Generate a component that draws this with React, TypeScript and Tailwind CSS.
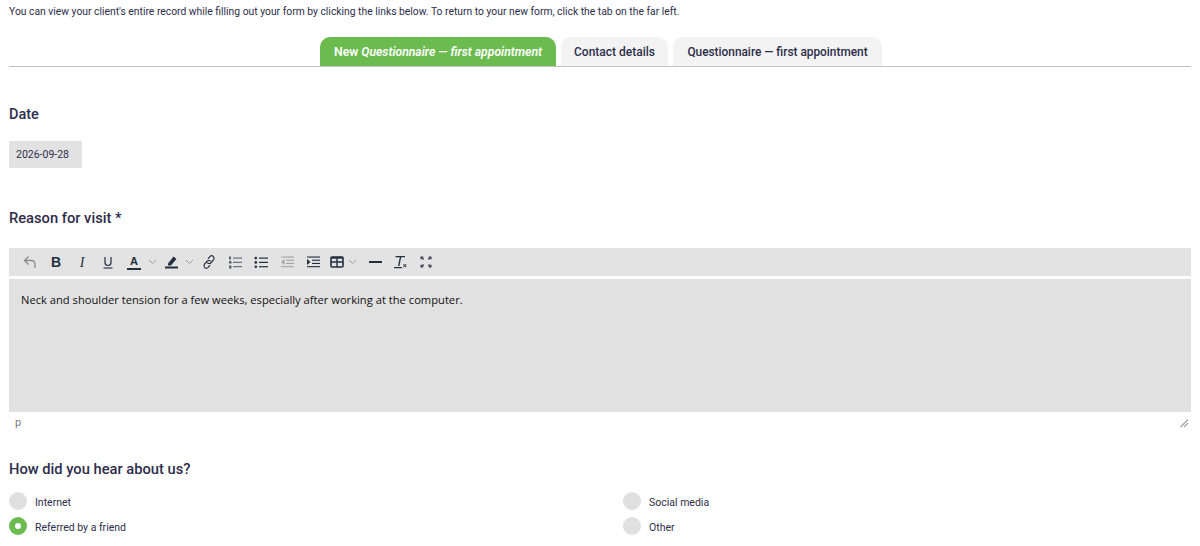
const ink = "#2d2d4a";

function Tb({ w, children }: { w: string; children: React.ReactNode }) {
  return <span className={`flex h-5 items-center justify-center ${w}`}>{children}</span>;
}

function Chevron() {
  return (
    <svg width="9" height="6" viewBox="0 0 9 6" fill="none" stroke="#9a9a9a" strokeWidth="1">
      <path d="M1 1l3.5 3.5L8 1" />
    </svg>
  );
}

function Toolbar() {
  return (
    <div className="flex h-[28px] items-center bg-[#e3e3e3] pl-[12px] text-[#222f3e]">
      <Tb w="w-[18px]">
        <svg width="14" height="14" viewBox="0 0 14 14" fill="none" stroke="#8d8d8d" strokeWidth="1.3">
          <path d="M5.5 1.5L1.5 5.5l4 4M1.5 5.5h6.5c2.5 0 4 1.6 4 4v3.5" />
        </svg>
      </Tb>
      <span className="w-[8px]" />
      <Tb w="w-[18px]">
        <span className="font-['Liberation_Sans',sans-serif] text-[14px] font-bold">B</span>
      </Tb>
      <span className="w-[8px]" />
      <Tb w="w-[18px]">
        <span className="font-['Liberation_Serif',serif] text-[14px] italic">I</span>
      </Tb>
      <span className="w-[8px]" />
      <Tb w="w-[18px]">
        <svg width="12" height="13" viewBox="0 0 12 13" fill="none" stroke="#222f3e">
          <path d="M3 1v5.5c0 4 6 4 6 0V1" strokeWidth="1.2" />
          <path d="M1.5 12h9" strokeWidth="1.1" />
        </svg>
      </Tb>
      <span className="w-[9px]" />
      <Tb w="w-[16px]">
        <span className="relative flex h-[15px] w-[14px] justify-center border-b-2 border-[#222f3e] font-['Liberation_Sans',sans-serif] text-[11px] leading-[13px] font-bold">
          A
        </span>
      </Tb>
      <span className="w-[6px]" />
      <Chevron />
      <span className="w-[6px]" />
      <Tb w="w-[16px]">
        <svg width="15" height="14" viewBox="0 0 15 14" fill="#222f3e">
          <path d="M4 8.5L9.5 1.5l3 2.5L7 10.5H4z" />
          <rect x="1" y="11.5" width="13" height="2" />
        </svg>
      </Tb>
      <span className="w-[6px]" />
      <Chevron />
      <span className="w-[6px]" />
      <Tb w="w-[18px]">
        <svg width="16" height="16" viewBox="0 0 15 15" fill="none" stroke="#222f3e" strokeWidth="1.1">
          <path d="M6.5 4.5l2-2.3a2.3 2.3 0 0 1 3.4 3l-2.6 3a2.3 2.3 0 0 1-3.3 0" />
          <path d="M8.5 10.5l-2 2.3a2.3 2.3 0 0 1-3.4-3l2.6-3a2.3 2.3 0 0 1 3.3 0" />
        </svg>
      </Tb>
      <span className="w-[8px]" />
      <Tb w="w-[18px]">
        <svg width="14" height="13" viewBox="0 0 14 13" fill="#5d6570">
          <rect x="5" y="1.5" width="9" height="1.1" />
          <rect x="5" y="5.8" width="9" height="1.1" />
          <rect x="5" y="10.1" width="9" height="1.1" />
          <rect x="1" y="0.5" width="2" height="3" />
          <rect x="1" y="5" width="2.5" height="2.6" />
          <rect x="1" y="9.5" width="2.5" height="3" />
        </svg>
      </Tb>
      <span className="w-[8px]" />
      <Tb w="w-[18px]">
        <svg width="14" height="13" viewBox="0 0 14 13" fill="#222f3e">
          <rect x="5" y="1.5" width="9" height="1.2" />
          <rect x="5" y="5.8" width="9" height="1.2" />
          <rect x="5" y="10.1" width="9" height="1.2" />
          <circle cx="1.8" cy="2.1" r="1.3" />
          <circle cx="1.8" cy="6.4" r="1.3" />
          <circle cx="1.8" cy="10.7" r="1.3" />
        </svg>
      </Tb>
      <span className="w-[8px]" />
      <Tb w="w-[18px]">
        <svg width="14" height="12" viewBox="0 0 14 12" fill="#a3a3a3">
          <rect x="1" y="0.5" width="13" height="1.1" />
          <rect x="6" y="3.7" width="8" height="1.1" />
          <rect x="6" y="6.9" width="8" height="1.1" />
          <rect x="1" y="10.1" width="13" height="1.1" />
          <path d="M4.5 3L1 6l3.5 3z" />
        </svg>
      </Tb>
      <span className="w-[8px]" />
      <Tb w="w-[18px]">
        <svg width="14" height="12" viewBox="0 0 14 12" fill="#222f3e">
          <rect x="1" y="0.5" width="13" height="1.1" />
          <rect x="6" y="3.7" width="8" height="1.1" />
          <rect x="6" y="6.9" width="8" height="1.1" />
          <rect x="1" y="10.1" width="13" height="1.1" />
          <path d="M1 3l3.5 3L1 9z" />
        </svg>
      </Tb>
      <span className="w-[7px]" />
      <Tb w="w-[16px]">
        <svg width="14" height="12" viewBox="0 0 14 12" fill="none" stroke="#222f3e">
          <rect x="1" y="1" width="12" height="10" rx="1" strokeWidth="1.6" />
          <path d="M1 6h12M7 1v10" strokeWidth="1.4" />
          <path d="M1 1.8h12" strokeWidth="1.8" />
        </svg>
      </Tb>
      <span className="w-[3px]" />
      <Chevron />
      <span className="w-[9px]" />
      <Tb w="w-[18px]">
        <span className="h-[2px] w-[13px] bg-[#222f3e]" />
      </Tb>
      <span className="w-[6px]" />
      <Tb w="w-[20px]">
        <svg width="14" height="14" viewBox="0 0 14 14" fill="#222f3e">
          <path d="M2.5 1h9.5v1.3H8.2L6.4 11H5L6.8 2.3H2.5z" />
          <rect x="1" y="12" width="8" height="1.2" />
          <path d="M10 9.5l.6-.6 1.2 1.2L13 8.9l.6.6-1.2 1.2 1.2 1.2-.6.6-1.2-1.2-1.2 1.2-.6-.6 1.2-1.2z" />
        </svg>
      </Tb>
      <span className="w-[7px]" />
      <Tb w="w-[18px]">
        <svg width="12" height="12" viewBox="0 0 13 13" fill="#3a4553">
          <path d="M.5.5h3.5L3 1.6l1.5 1.5-1.3 1.3L1.7 2.9.5 4z" />
          <path d="M12.5.5V4l-1.2-1.1-1.5 1.5-1.3-1.3L10 1.6 9 .5z" />
          <path d="M.5 12.5V9l1.2 1.1 1.5-1.5 1.3 1.3L3 11.4 4 12.5z" />
          <path d="M12.5 12.5H9l1-1.1-1.5-1.5 1.3-1.3 1.5 1.5L12.5 9z" />
        </svg>
      </Tb>
    </div>
  );
}

function Radio({ label, checked }: { label: string; checked?: boolean }) {
  return (
    <div className="flex h-[25px] items-center gap-[8px]">
      {checked ? (
        <span className="flex h-[18px] w-[18px] items-center justify-center rounded-full bg-[#6cbb4f]">
          <span className="h-[6px] w-[6px] rounded-full bg-white" />
        </span>
      ) : (
        <span className="h-[18px] w-[18px] rounded-full bg-[#e0e0e0]" />
      )}
      <span className="pt-[4px] text-[10.5px] leading-[14px] text-[#2d2d4a]">{label}</span>
    </div>
  );
}

export default function App() {
  return (
    <div className="h-[546px] overflow-hidden bg-white px-[9px] font-['Roboto',sans-serif]" style={{ color: ink }}>
      <p className="pt-[5px] text-[10.33px] leading-[14px] text-[#2d2d4a]">
        You can view your client's entire record while filling out your form by clicking the links below. To return to your new form, click the tab on the far left.
      </p>

      <div className="mt-[18px] flex h-[30px] justify-center gap-[5px] border-b border-[#c4c4c4] pl-[2px] text-[12px] leading-[16px] font-medium">
        <div className="flex w-[236px] items-center justify-center rounded-t-[10px] bg-[#6cbb4f] pt-[1px] text-[12.2px] font-semibold text-white">
          <span>
            New <em>Questionnaire — first appointment</em>
          </span>
        </div>
        <div className="flex w-[107px] items-center justify-center rounded-t-[10px] bg-[#f3f3f4]">Contact details</div>
        <div className="flex w-[209px] items-center justify-center rounded-t-[10px] bg-[#f3f3f4] pt-[1px] text-[11.85px]">
          Questionnaire — first appointment
        </div>
      </div>

      <h2 className="mt-[39px] text-[14.5px] leading-[18px] font-medium">Date</h2>
      <div className="mt-[17px] flex h-[27px] w-[73px] items-center bg-[#e2e2e2] pl-[7px] text-[10.5px]">2026-09-28</div>

      <h2 className="mt-[41px] text-[14.7px] leading-[18px] font-medium">Reason for visit *</h2>

      <div className="mt-[21px]">
        <Toolbar />
        <div className="mt-[3px] h-[133px] bg-[#e1e1e1] px-[12px] py-[13px] font-['Open_Sans',sans-serif] text-[11.18px] leading-[16px] text-[#111111]">
          Neck and shoulder tension for a few weeks, especially after working at the computer.
        </div>
        <div className="flex h-[23px] items-center justify-between pr-[2px] pb-[1px] pl-[6px] text-[11px] text-[#7a7a7a]">
          <span>p</span>
          <svg width="10" height="10" viewBox="0 0 10 10" stroke="#a0a0a0" strokeWidth="1.1">
            <path d="M1.5 9L9 1.5M5 9l4-4" />
          </svg>
        </div>
      </div>

      <h2 className="mt-[25px] text-[14.7px] leading-[18px] font-medium">How did you hear about us?</h2>

      <div className="mt-[10px] grid grid-cols-[614px_1fr]">
        <Radio label="Internet" />
        <Radio label="Social media" />
        <Radio label="Referred by a friend" checked />
        <Radio label="Other" />
      </div>
    </div>
  );
}
